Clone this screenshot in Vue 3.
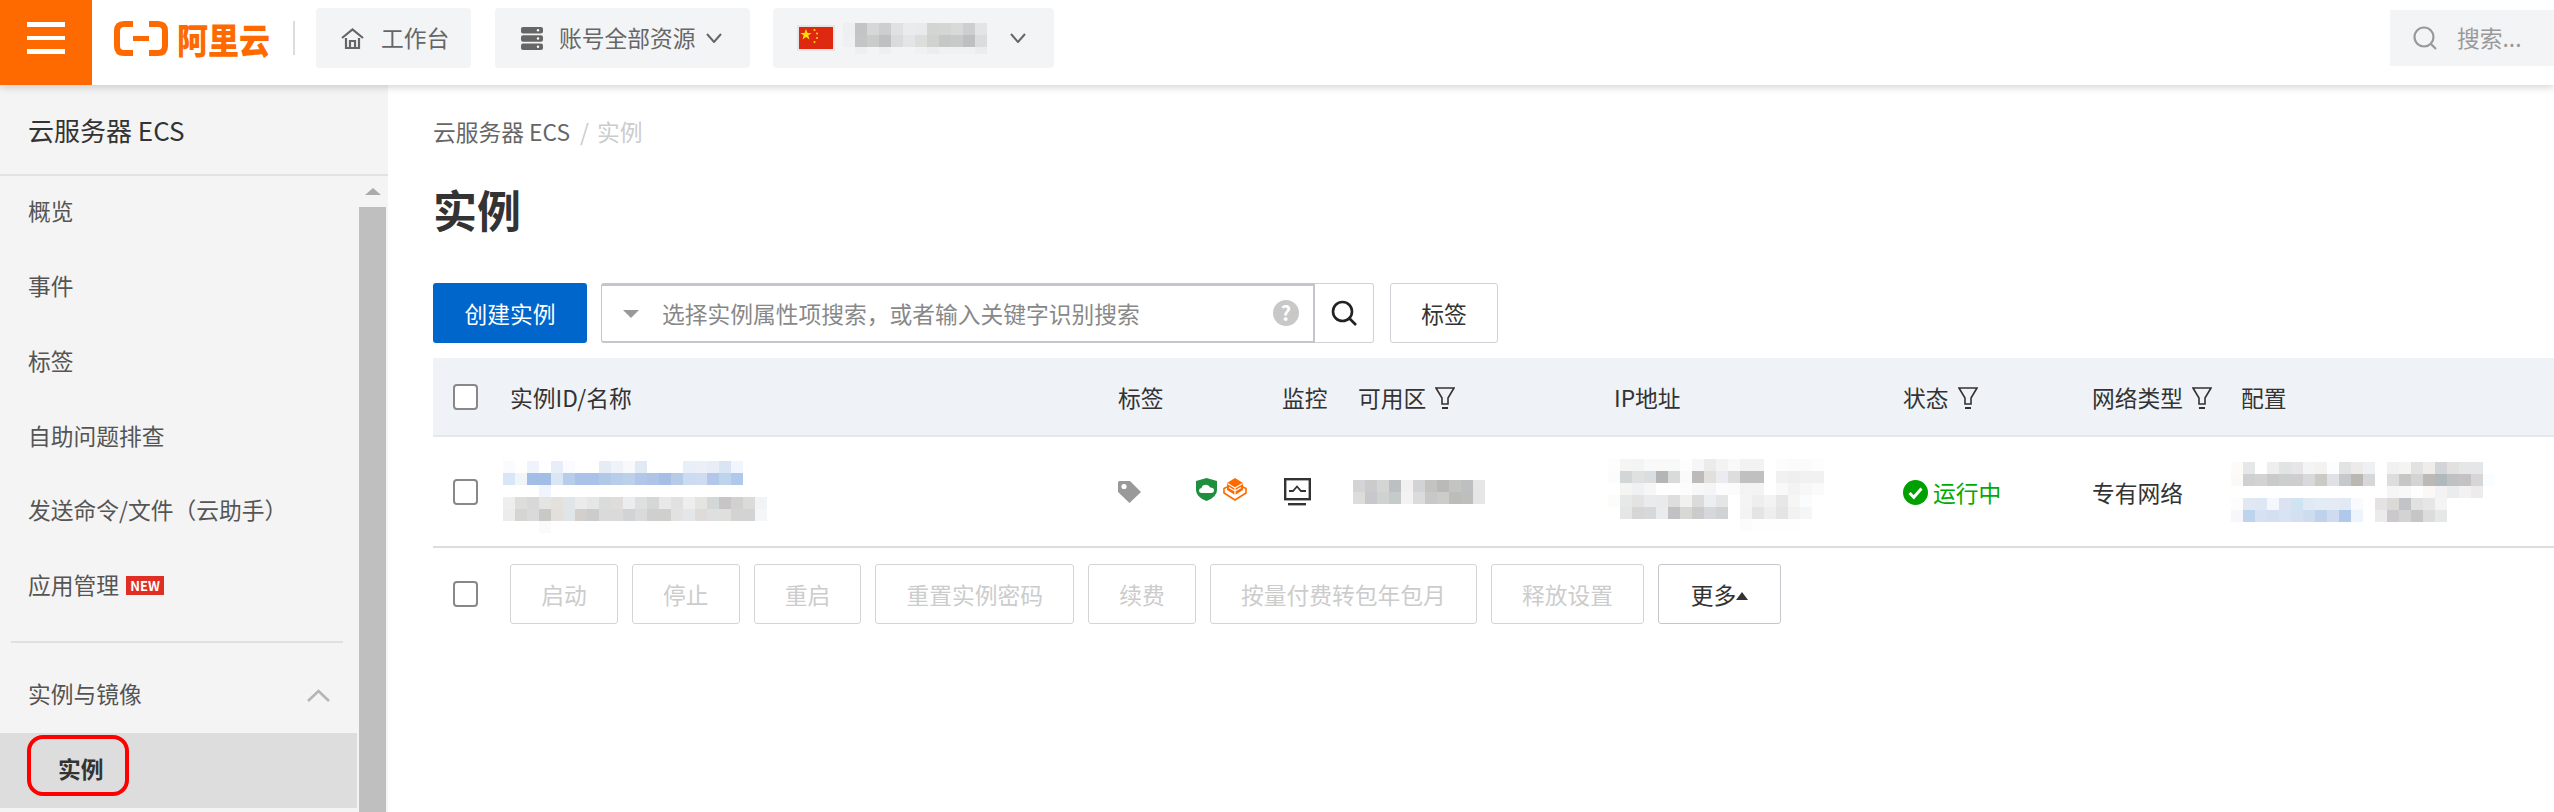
<script setup>
import { h } from 'vue'

// blurred-out text from the screenshot, one string per row, 12px cells, "-" = nothing
const Mosaic = (props) => {
  const rows = props.rows.map((r) => r.split(' '))
  const rects = []
  rows.forEach((row, y) => {
    row.forEach((c, x) => {
      if (c !== '-') {
        rects.push(h('rect', { x: x * 12, y: y * 12, width: 12, height: 12, fill: '#' + c }))
      }
    })
  })
  const w = Math.max(...rows.map((r) => r.length)) * 12
  const height = props.clip || rows.length * 12
  return h('svg', { width: w, height, viewBox: `0 0 ${w} ${height}`, 'shape-rendering': 'crispEdges', style: 'display:block' }, rects)
}
Mosaic.props = ['rows', 'clip']

const chipBlur = [
  'eeeff1 c3c4c5 d6d7d8 cdcecf e0e1e2 eaebec e9eaeb d3d5d3 d4d5d5 d9dad8 cdcecf e3e4e5',
  'eff0f1 c4c6c5 cacbcb bfc0c0 dadbdc e4e5e6 dcdedc d0d2d0 c6c7c7 c8c9c9 bebfc0 dbdcde',
  'f3f4f6 eeeff0 f3f4f6 eeeff0 f3f4f6 f3f4f6 f0f1f2 ecedee f0f1f2 f0f1f2 f0f1f2 ebecee'
]
const nameBlur = [
  'fafbfe - eff3fc - e7eefa f9fbfe - - e5ecf6 eff3f9 f8f9fb dfeaf5 - - - e8eff8 ebeff8 e8edf7 d9e5f5 f1f5fd',
  'd9e6f6 f0f6f8 a2bde6 a2bde6 dbe6f5 b8cde9 abc1e7 abc1e7 b0c9e8 b7cde9 bcd0e9 b1c6e8 afc3e7 a4bee6 b5cbe7 cadbf2 cfdcf0 b2c7ea bed3ec afc8ec',
  '- - - f0f4fd',
  'eeeeee dddddb d8d8d8 e4e4e2 e4e1dd e0e5e8 ebebeb e6e6e6 dadcdb dfdddb ecedef dfdfdf d5d7d6 e8e8e8 e1e1e1 eeeeee e4e4e2 d4d7d7 c7c5c6 d1d1d0 dcdbd9 f1f3f6',
  'ebedeb d6d5d4 dadada c8c9c5 e3dfdb e0e5e8 d3cfcc cbcccd dadada dadada d2d3d5 dadada d0cfcf cfcfce e3e2e0 e4e6ea dedbd9 dde0de e0dfdd d2d4d3 d3d3d3 f5f6f8',
  '- - - fafafa'
]
const zoneBlur = [
  'd3d4d5 cbcbcc d5d5d3 bcc0c3 f3f0f0 d2d3d6 c3c3c2 bababa c4c4c2 bebfc1 e6e6e6',
  'dddcdb c7c8cb d0d2d2 c5cbcb f3f3f2 d9dcdb c8c8c8 cecccb bcbcba bebebd e6e6e6'
]
const ipBlur = [
  'fdfdfd f5f5f3 f3f5f4 f9f9f9 f9f9f9 f9f9f9 fefefe f6f6f6 ebebeb f3f3f3 f9f9f9 f2f2f2 f2f2f2 - fcfcfc fbfbf9 fbfbfb fcfdfc',
  'fcfcfc d3d6d6 dfe0e0 dbdee1 b5b5b5 d9dada fafafa bcbabb e1e0dd eaecef dcdddc c0c0c0 c0c0c0 - f1f1f1 efefef f1f1f1 f1f1f1',
  '- f4f4f3 f0f1f3 f6f6f6 fefefe fefefe fcfcfc f7f7f7 f4f5f6 fcfcfc fbfbfb f3f3f3 f3f3f3 - f9f9f9 f3f3f3 f7f7f7 fafafa',
  'fcfcfb e7e9e9 e3e3e1 eaebed e9ebeb dedede f1f1f0 dbdbdb eceef1 e4e5e5 - f4f4f4 eeeeef f3f3f4 e7e7e7 f6f6f4 fbfcfe -',
  '- e5e6e5 d6d6d6 d6d8da e9ebee c2c0c2 d8d8d5 cbcbcc d6d7db d1d2d3 - f3f3f1 e4e4e4 eeeeee e4e4e4 f2f2f2 f5f6f8 -',
  '- - - - - - - - - - - fcfcfc fefefe fefefe fefefe fefefe'
]
const configBlur = [
  'fdfbf8 e5e7e8 - efeeec e2e4e3 e6e6e8 f4f4f5 f3f2f0 fcfdfe e1e4e3 ecebe9 eff0f2 - f1f1f1 f4f4f2 e2e2e2 eeedeb d2d4d7 e2e1df e5e6e8 e5e6e8',
  'fcfaf7 ced0d2 d5d3d1 c8cacc cdcfce cfcdcd d8d9da cccac4 dfe1e4 c6c9cc bbb7b3 d6d7d9 - dedcdd c6c6c5 d4d4d4 bdb9b5 b0babc c0c1c3 c4c2c5 d8d5d5 fafdff',
  '- - - - - - - - - - - - - f5f5f5 f8f8f8 fefefe faf9f7 f3f3f3 ebecee f2f2f2 edecec',
  'fdfdfd e1e8f3 dee7f4 f4f7fc dde2f3 d0e3f2 e1e9f5 e3ebf5 e4ebf5 e1e9f5 f8fafe - e4e2e2 dbdad7 c1c3c6 e1e1e1 e6e6e6 f4f4f5',
  'f6f7fb bed3ed d6e2f3 d3e0f1 d8e4f4 d3e0f1 cddcef bed2ec cfdbee b0c9eb eef4fc - ebebeb cbc9cc d3d3d3 c6c6c6 dcdcda e6e7e8'
]

const menu = ['概览', '事件', '标签', '自助问题排查', '发送命令/文件（云助手）']
const actions = ['启动', '停止', '重启', '重置实例密码', '续费', '按量付费转包年包月', '释放设置']
</script>

<template>
  <div class="page">
    <header class="topbar">
      <div class="burger"><i></i><i></i><i></i></div>
      <div class="logo">
        <svg width="54" height="35" viewBox="0 0 54 35" fill="none" stroke="#ff6a00" stroke-width="6">
          <path d="M19 3H10Q3 3 3 10V25Q3 32 10 32H19" />
          <path d="M35 3H44Q51 3 51 10V25Q51 32 44 32H35" />
          <path d="M19 17.5H35" stroke-width="5" />
        </svg>
        <span>阿里云</span>
      </div>
      <div class="sep"></div>
      <div class="chip chip-home">
        <svg width="23" height="21" viewBox="0 0 23 21" fill="none" stroke="#666" stroke-width="2.2">
          <path d="M1 10L11.5 1.5L22 10" />
          <path d="M5 10V20H18V10" />
          <path d="M9 20V13H14V20" />
        </svg>
        <span>工作台</span>
      </div>
      <div class="chip chip-res">
        <svg width="22" height="23" viewBox="0 0 22 23" fill="#666">
          <rect y="0" width="22" height="6.5" rx="2" />
          <rect y="8.2" width="22" height="6.5" rx="2" />
          <rect y="16.5" width="22" height="6.5" rx="2" />
          <circle cx="17" cy="3.2" r="1.2" fill="#fff" />
          <circle cx="17" cy="11.5" r="1.2" fill="#fff" />
          <circle cx="17" cy="19.7" r="1.2" fill="#fff" />
        </svg>
        <span>账号全部资源</span>
        <svg class="chev" width="16" height="10" viewBox="0 0 16 10" fill="none" stroke="#666" stroke-width="2"><path d="M1 1L8 9L15 1" /></svg>
      </div>
      <div class="chip chip-region">
        <svg class="flag" width="38" height="26" viewBox="0 0 38 26">
          <rect width="38" height="26" fill="#e6e6e6" />
          <rect x="2" y="2" width="34" height="22" fill="#de2910" />
          <polygon points="9,4 10.5,8 14.5,8 11.3,10.5 12.5,14.5 9,12 5.5,14.5 6.7,10.5 3.5,8 7.5,8" fill="#ffde00" />
          <circle cx="17.5" cy="5" r="1" fill="#ffde00" />
          <circle cx="20" cy="8.5" r="1" fill="#ffde00" />
          <circle cx="20" cy="13" r="1" fill="#ffde00" />
          <circle cx="17.5" cy="17" r="1" fill="#ffde00" />
        </svg>
        <Mosaic :rows="chipBlur" :clip="31" />
        <svg class="chev" width="16" height="10" viewBox="0 0 16 10" fill="none" stroke="#666" stroke-width="2"><path d="M1 1L8 9L15 1" /></svg>
      </div>
      <div class="top-search">
        <svg width="24" height="24" viewBox="0 0 24 24" fill="none" stroke="#999" stroke-width="2.2">
          <circle cx="11" cy="11" r="9.5" />
          <path d="M18 18L23 23" />
        </svg>
        <span>搜索...</span>
      </div>
    </header>

    <div class="body">
      <aside class="side">
        <div class="side-title">云服务器 ECS</div>
        <div class="side-scroll">
          <div class="side-menu">
            <div v-for="m in menu" :key="m" class="item"><span>{{ m }}</span></div>
            <div class="item"><span>应用管理</span><b class="new">NEW</b></div>
            <div class="divider"></div>
            <div class="item group">
              <span>实例与镜像</span>
              <svg width="23" height="13" viewBox="0 0 23 13" fill="none" stroke="#b5b5b5" stroke-width="2.6"><path d="M1 12L11.5 2L22 12" /></svg>
            </div>
            <div class="item active">
              <span>实例</span>
              <div class="ring"></div>
            </div>
          </div>
          <div class="scrollbar">
            <div class="arrow"></div>
            <div class="thumb"></div>
          </div>
        </div>
      </aside>

      <main class="main">
        <div class="crumb">云服务器 ECS<span class="slash">/</span><span class="crumb-cur">实例</span></div>
        <h1 class="title">实例</h1>

        <div class="toolbar">
          <button class="btn-create">创建实例</button>
          <div class="search">
            <div class="search-input">
              <i class="tri"></i>
              <span class="ph">选择实例属性项搜索，或者输入关键字识别搜索</span>
              <span class="help">?</span>
            </div>
            <div class="search-btn">
              <svg width="26" height="26" viewBox="0 0 26 26" fill="none" stroke="#222" stroke-width="2.6">
                <circle cx="11.5" cy="11.5" r="9.5" />
                <path d="M18 18L25 25" />
              </svg>
            </div>
          </div>
          <button class="btn-tag">标签</button>
        </div>

        <div class="row thead">
          <div class="cell-check"><i class="check"></i></div>
          <div>实例ID/名称</div>
          <div>标签</div>
          <div>监控</div>
          <div class="th-filter">
            可用区
            <svg class="funnel" width="20" height="22" viewBox="0 0 20 22" fill="none" stroke="#333" stroke-width="1.6">
              <path d="M1 1H19L13 11V17H7V11Z" />
              <path d="M7 21H13" stroke-width="2" />
            </svg>
          </div>
          <div>IP地址</div>
          <div class="th-filter">
            状态
            <svg class="funnel" width="20" height="22" viewBox="0 0 20 22" fill="none" stroke="#333" stroke-width="1.6">
              <path d="M1 1H19L13 11V17H7V11Z" />
              <path d="M7 21H13" stroke-width="2" />
            </svg>
          </div>
          <div class="th-filter">
            网络类型
            <svg class="funnel" width="20" height="22" viewBox="0 0 20 22" fill="none" stroke="#333" stroke-width="1.6">
              <path d="M1 1H19L13 11V17H7V11Z" />
              <path d="M7 21H13" stroke-width="2" />
            </svg>
          </div>
          <div>配置</div>
        </div>

        <div class="row tbody">
          <div class="cell-check"><i class="check"></i></div>
          <div class="blur-name"><Mosaic :rows="nameBlur" /></div>
          <div class="tag-cell">
            <svg width="23" height="22" viewBox="0 0 23 22">
              <path d="M0 1.5Q0 0 1.5 0H12L23 11L11.5 22L0 11Z" fill="#999" />
              <circle cx="6" cy="5.5" r="2.6" fill="#fff" />
            </svg>
            <svg class="shield" width="21" height="23" viewBox="0 0 21 23">
              <path d="M10.5 0L21 3V12Q21 19 10.5 23Q0 19 0 12V3Z" fill="#1f8f3f" />
              <path d="M6 15Q3 15 3 12.5Q3 10.3 5.6 10Q6.2 6.8 10 6.8Q13 6.8 14.2 9.5Q18 9.5 18 12.3Q18 15 15 15Z" fill="#fff" />
            </svg>
            <svg class="stack" width="24" height="23" viewBox="0 0 24 23">
              <path d="M12 0L20 5V12L12 17L4 12V5Z" fill="#ff6a00" />
              <path d="M4.5 5.5L12 10L19.5 5.5M12 10V17M6 9.5L12 13L18 9.5" fill="none" stroke="#fff" stroke-width="1.2" />
              <path d="M4 9L1 10.5V15L12 22L23 15V10.5L20 9" fill="none" stroke="#ff6a00" stroke-width="1.6" />
            </svg>
          </div>
          <div class="mon-cell">
            <svg width="27" height="28" viewBox="0 0 27 28" fill="none">
              <rect x="1.2" y="1.2" width="24.6" height="20" stroke="#333" stroke-width="2.4" />
              <path d="M5 13H9L13 8.5L17 13H22" stroke="#333" stroke-width="1.8" />
              <rect x="4" y="25" width="18" height="2.4" fill="#333" />
            </svg>
          </div>
          <div class="blur-zone"><Mosaic :rows="zoneBlur" /></div>
          <div class="blur-ip"><Mosaic :rows="ipBlur" /></div>
          <div class="status">
            <svg width="25" height="25" viewBox="0 0 25 25">
              <circle cx="12.5" cy="12.5" r="12.5" fill="#00a000" />
              <path d="M6.5 13L10.8 17.3L18.5 8.5" fill="none" stroke="#fff" stroke-width="3" />
            </svg>
            <span>运行中</span>
          </div>
          <div class="net">专有网络</div>
          <div class="blur-config"><Mosaic :rows="configBlur" /></div>
        </div>

        <div class="actions">
          <div class="cell-check"><i class="check"></i></div>
          <button v-for="a in actions" :key="a" class="act" disabled>{{ a }}</button>
          <button class="act more">更多<i class="up"></i></button>
        </div>
      </main>
    </div>
  </div>
</template>

<style>
html, body { margin: 0; background: #fff; overflow: hidden; }
</style>

<style scoped>
.page {
  width: 2554px;
  height: 812px;
  display: flex;
  flex-direction: column;
  overflow: hidden;
  font-family: "Noto Sans CJK SC", "Noto Sans", sans-serif;
  font-size: 22.75px;
  color: #333;
}

.topbar {
  height: 85px;
  flex: none;
  display: flex;
  align-items: center;
  box-sizing: border-box;
  padding-bottom: 9px;
  background: #fff;
  box-shadow: 0 2px 8px rgba(0, 0, 0, 0.18);
  position: relative;
  z-index: 2;
}
.burger {
  width: 92px;
  height: 85px;
  align-self: flex-start;
  box-sizing: border-box;
  padding-bottom: 9px;
  background: #ff6a00;
  display: flex;
  flex-direction: column;
  align-items: center;
  justify-content: center;
  gap: 9px;
}
.burger i { width: 38px; height: 4.5px; background: #fff; }
.logo { display: flex; align-items: center; margin-left: 22px; width: 157px; }
.logo span {
  margin-left: 9px;
  font-size: 31px;
  line-height: 35px;
  font-weight: 900;
  color: #ff6a00;
  white-space: nowrap;
  transform: scaleY(1.12);
}
.sep { width: 2px; height: 34px; background: #ddd; margin-left: 22px; }
.chip {
  height: 60px;
  background: #f3f4f6;
  border-radius: 4px;
  display: flex;
  align-items: center;
  color: #666;
  box-sizing: border-box;
}
.chip span { margin-top: -2px; }
.chip-home { width: 155px; margin-left: 21px; padding-left: 25px; }
.chip-home span { margin-left: 17px; }
.chip-res { width: 255px; margin-left: 24px; padding-left: 26px; }
.chip-res span { margin-left: 16px; }
.chip-res .chev { margin-left: 10px; }
.chip-region { width: 281px; margin-left: 23px; padding-left: 24px; }
.flag { margin-right: 8px; }
.chip-region .chev { margin-left: 23px; }
.top-search {
  margin-left: auto;
  width: 164px;
  height: 56px;
  background: #f3f4f6;
  display: flex;
  align-items: center;
  padding-left: 23px;
  box-sizing: border-box;
  color: #999;
}
.top-search span { margin-left: 20px; margin-top: -2px; white-space: nowrap; }

.body { flex: 1; display: flex; min-height: 0; }

.side { width: 388px; flex: none; background: #f4f4f4; display: flex; flex-direction: column; }
.side-title {
  height: 89px;
  flex: none;
  display: flex;
  align-items: center;
  padding-left: 28px;
  font-size: 26px;
  color: #333;
  border-bottom: 2px solid #e2e2e2;
  box-sizing: content-box;
}
.side-scroll { flex: 1; display: flex; min-height: 0; }
.side-menu { width: 357px; flex: none; }
.item {
  height: 74.75px;
  display: flex;
  align-items: center;
  padding-left: 28px;
  color: #555;
  box-sizing: border-box;
  position: relative;
}
.item span { margin-top: -5px; }
.new {
  margin-left: 7px;
  width: 38px;
  height: 19px;
  background: #e02e24;
  color: #fff;
  font-size: 13px;
  font-weight: 700;
  line-height: 19px;
  text-align: center;
  margin-top: -3px;
}
.divider { height: 2px; margin: 16px 14px 16px 11px; background: #e0e0e0; }
.group { justify-content: space-between; padding-right: 27px; }
.active {
  background: #ddd;
  font-weight: 700;
  color: #333;
  padding-left: 58px;
}
.ring {
  position: absolute;
  left: 27px;
  top: 2px;
  width: 102px;
  height: 61px;
  border: 4px solid #f00;
  border-radius: 16px;
  box-sizing: border-box;
}
.scrollbar { width: 27px; margin-left: 2px; }
.arrow { height: 31px; display: flex; align-items: center; justify-content: center; }
.arrow::before {
  content: "";
  border-left: 8px solid transparent;
  border-right: 8px solid transparent;
  border-bottom: 7px solid #aaa;
}
.thumb { height: 100%; background: #bfbfbf; }

.main { flex: 1; padding-left: 45px; min-width: 0; }
.crumb {
  margin-top: 30px;
  height: 34px;
  line-height: 34px;
  color: #666;
}
.slash { margin: 0 8px 0 10px; color: #ccc; }
.crumb-cur { color: #ccc; }
.title {
  margin: 30px 0 0;
  height: 60px;
  line-height: 60px;
  font-size: 44px;
  font-weight: 700;
  color: #333;
}
.toolbar { margin-top: 44px; display: flex; align-items: stretch; height: 60px; }
.btn-create {
  width: 154px;
  border: 0;
  border-radius: 3px;
  background: #06c;
  color: #fff;
  font: inherit;
  padding: 0;
}
.search { width: 773px; margin-left: 14px; display: flex; }
.search-input {
  flex: 1;
  display: flex;
  align-items: center;
  position: relative;
  border: 2px solid #c4c6cc;
  border-top-width: 3px;
  border-left-width: 1px;
  border-radius: 3px 0 0 3px;
  box-sizing: border-box;
  background: #fff;
  padding-left: 21px;
}
.tri {
  width: 0;
  height: 0;
  border-left: 8px solid transparent;
  border-right: 8px solid transparent;
  border-top: 8px solid #999;
}
.ph { margin-left: 23px; color: #888; white-space: nowrap; }
.help {
  position: absolute;
  right: 14px;
  top: 14px;
  width: 26px;
  height: 26px;
  border-radius: 50%;
  background: #c8c8c8;
  color: #fff;
  font-size: 20px;
  font-weight: 700;
  line-height: 26px;
  text-align: center;
}
.search-btn {
  width: 59px;
  display: flex;
  align-items: center;
  justify-content: center;
  border: 1px solid #cfd1d6;
  border-left: 0;
  border-radius: 0 3px 3px 0;
  box-sizing: border-box;
}
.btn-tag {
  width: 108px;
  margin-left: 16px;
  background: #fff;
  border: 1px solid #cfd1d6;
  border-radius: 3px;
  font: inherit;
  color: #333;
  padding: 0;
}

.row {
  display: grid;
  grid-template-columns: 77px 608px 164px 76px 256px 289px 189px 149px 1fr;
  align-items: center;
  box-sizing: content-box;
}
.thead {
  margin-top: 15px;
  height: 77px;
  background: #eff2f6;
  border-bottom: 2px solid #e4e7ec;
}
.thead > div + div { margin-top: 2px; }
.tbody {
  height: 109px;
  border-bottom: 2px solid #ddd;
}
.cell-check { padding-left: 20px; display: flex; }
.check {
  width: 25px;
  height: 26px;
  box-sizing: border-box;
  border: 2px solid #888;
  border-radius: 4px;
  background: #fff;
}
.th-filter { display: flex; align-items: center; }
.funnel { margin-left: 9px; }
.blur-name { margin-left: -7px; margin-top: 11px; }
.tag-cell { display: flex; align-items: flex-start; height: 23px; margin-top: 2px; }
.shield { margin-left: 55px; margin-top: -3px; }
.stack { margin-left: 6px; margin-top: -3px; }
.mon-cell { margin-left: 2px; height: 28px; }
.blur-zone { margin-left: -5px; }
.blur-ip { margin-left: -6px; margin-top: 7px; }
.status { display: flex; align-items: center; color: #0a0; margin-top: 2px; }
.status span { margin-left: 5px; }
.net { color: #333; margin-top: 2px; }
.blur-config { margin-left: -10px; }

.actions { display: flex; align-items: center; margin-top: 16px; gap: 14px; height: 60px; }
.actions .cell-check { width: 63px; flex: none; box-sizing: border-box; }
.act {
  height: 60px;
  padding: 0 30.15px;
  background: #fff;
  border: 1px solid #d5d5d5;
  border-radius: 3px;
  font: inherit;
  color: #ccc;
  white-space: nowrap;
}
.more {
  padding: 0 31.5px;
  color: #333;
  border-color: #c4c6cc;
  display: flex;
  align-items: center;
}
.up {
  width: 0;
  height: 0;
  margin-top: 4px;
  border-left: 6.5px solid transparent;
  border-right: 6.5px solid transparent;
  border-bottom: 8px solid #333;
}
</style>
